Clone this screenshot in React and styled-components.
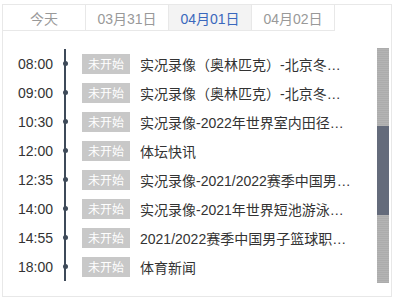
import React from "react";
import styled, { createGlobalStyle } from "styled-components";

const Global = createGlobalStyle`
  body {
    margin: 0;
    background: #fff;
    font-family: "Liberation Sans", "Noto Sans CJK SC", sans-serif;
  }
`;

const Frame = styled.div`
  margin: 4px 0 0 2px;
  width: 390px;
  height: 293px;
  box-sizing: border-box;
  border: 1px solid #e8e8e8;
  display: flex;
  flex-direction: column;
`;

const Tabs = styled.div`
  display: flex;
  align-self: flex-start;
  border-bottom: 1px solid #e8e8e8;
`;

const Tab = styled.div`
  width: 82px;
  height: 25px;
  border-right: 1px solid #e8e8e8;
  display: flex;
  align-items: center;
  justify-content: center;
  font-size: 14px;
  color: ${(p) => (p.active ? "#3a68bd" : "#999")};
  background: ${(p) => (p.active ? "#f3f3f3" : "#fff")};
`;

const Body = styled.div`
  flex: 1;
  display: flex;
  padding: 17px 2px 0 0;
`;

const List = styled.div`
  flex: 1;
  display: flex;
  flex-direction: column;
  padding-top: 1px;
`;

const Row = styled.div`
  height: 29px;
  display: flex;
  align-items: center;
`;

const Time = styled.div`
  width: 50px;
  text-align: right;
  font-size: 14px;
  color: #333;
`;

const Axis = styled.div`
  width: 24px;
  height: 100%;
  margin-right: 5px;
  display: flex;
  align-items: center;
  justify-content: center;
  background: linear-gradient(
    to right,
    transparent 11px,
    #3e4a59 11px,
    #3e4a59 13px,
    transparent 13px
  );
`;

const Dot = styled.span`
  width: 5px;
  height: 5px;
  border-radius: 50%;
  background: #3e4a59;
`;

const Badge = styled.span`
  width: 48px;
  height: 20px;
  background: #c8c8c8;
  color: #fff;
  font-size: 12px;
  display: flex;
  align-items: center;
  justify-content: center;
  margin-right: 10px;
`;

const Title = styled.span`
  width: 214px;
  font-size: 14px;
  color: #333;
  white-space: nowrap;
  overflow: hidden;
  text-overflow: ellipsis;
`;

const Track = styled.div`
  width: 12px;
  height: 235px;
  display: flex;
  flex-direction: column;
  background: repeating-linear-gradient(
    to bottom,
    #acacac 0,
    #acacac 1px,
    #b4b4b4 1px,
    #b4b4b4 2px
  );
`;

const Thumb = styled.div`
  margin-top: 78px;
  height: 89px;
  background: #646b7b;
`;

const tabs = ["今天", "03月31日", "04月01日", "04月02日"];

const items = [
  ["08:00", "实况录像（奥林匹克）-北京冬奥会闭幕式"],
  ["09:00", "实况录像（奥林匹克）-北京冬奥会开幕式"],
  ["10:30", "实况录像-2022年世界室内田径锦标赛"],
  ["12:00", "体坛快讯"],
  ["12:35", "实况录像-2021/2022赛季中国男子篮球职业联赛"],
  ["14:00", "实况录像-2021年世界短池游泳锦标赛"],
  ["14:55", "2021/2022赛季中国男子篮球职业联赛"],
  ["18:00", "体育新闻"],
];

export default function App() {
  return (
    <>
      <Global />
      <Frame>
        <Tabs>
          {tabs.map((t, i) => (
            <Tab key={t} active={i === 2}>
              {t}
            </Tab>
          ))}
        </Tabs>
        <Body>
          <List>
            {items.map(([time, title]) => (
              <Row key={time}>
                <Time>{time}</Time>
                <Axis>
                  <Dot />
                </Axis>
                <Badge>未开始</Badge>
                <Title>{title}</Title>
              </Row>
            ))}
          </List>
          <Track>
            <Thumb />
          </Track>
        </Body>
      </Frame>
    </>
  );
}
